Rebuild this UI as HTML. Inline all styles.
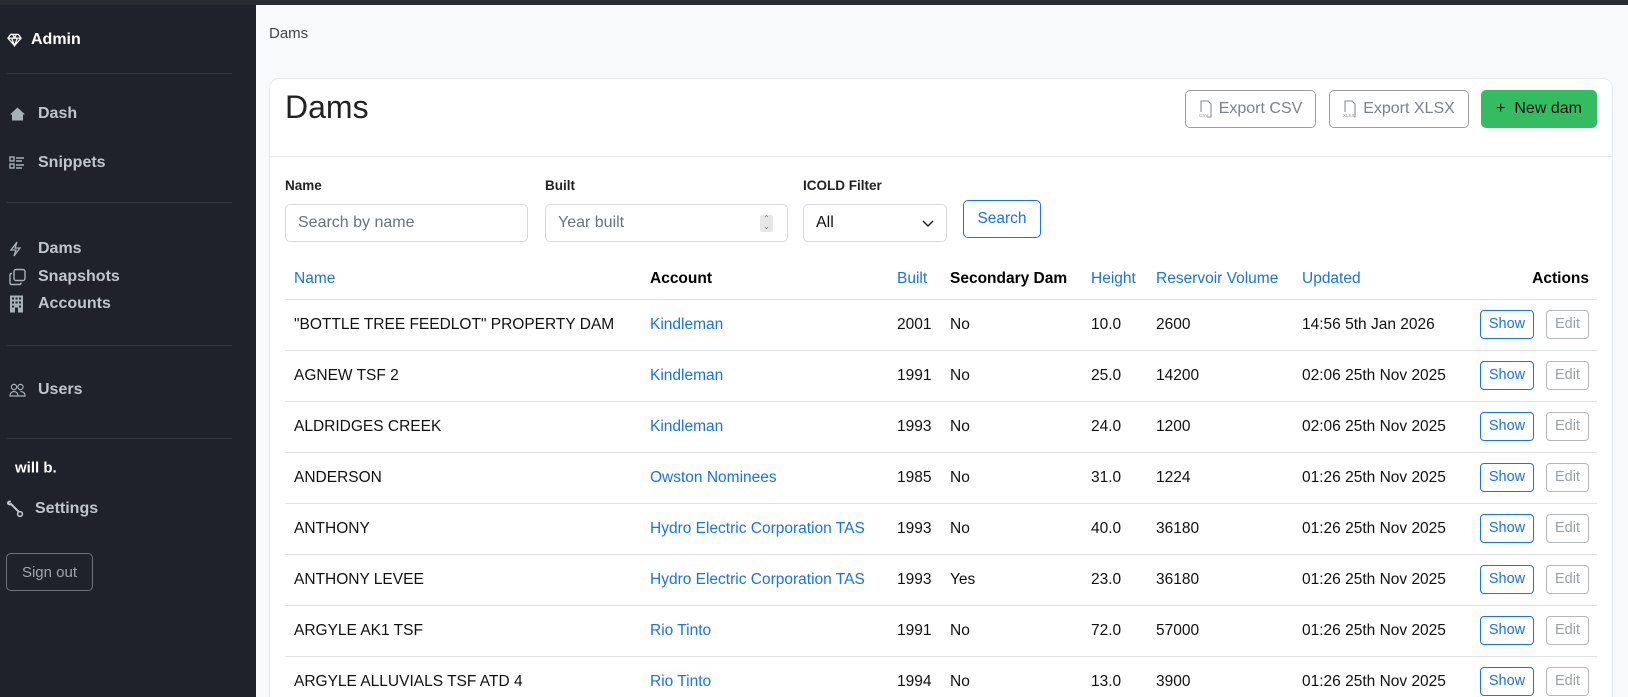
<!DOCTYPE html>
<html><head><meta charset="utf-8"><style>
*{box-sizing:border-box;margin:0;padding:0}
html,body{width:1628px;height:697px;overflow:hidden}
body{font-family:"Liberation Sans",sans-serif;background:#f8f9fa;position:relative;color:#111}
.top{position:absolute;left:0;top:0;width:1628px;height:5px;background:#2a2c33}
.side{position:absolute;left:0;top:5px;width:256px;height:692px;background:#1f222a;color:#c3c8d0}
.side .it{position:absolute;left:38px;font-size:16px;font-weight:bold;color:#bfc5ce;transform:translateY(-50%)}
.side .ic{position:absolute;left:9px;transform:translateY(-50%)}
.side hr{position:absolute;left:7px;width:225px;border:0;border-top:1px solid #343842}
.card{position:absolute;left:269px;top:78px;width:1344px;height:640px;background:#fff;border:1px solid #e6e9ec;border-radius:10px}
.btn{position:absolute;height:38px;border-radius:5px;font-size:16px;display:flex;align-items:center;justify-content:center}
.lbl{position:absolute;top:178px;font-size:13.5px;font-weight:bold;color:#222}
.inp{position:absolute;top:204px;height:38px;border:1px solid #d5d9de;border-radius:5px;font-size:16px;color:#6c737b;padding-left:12px;display:flex;align-items:center;background:#fff}
table{position:absolute;left:285px;top:259px;width:1312px;border-collapse:collapse;table-layout:fixed;font-size:15.5px}
td,th{padding-left:9px;text-align:left;white-space:nowrap;overflow:visible}
th{height:40px;border-bottom:1px solid #dee2e6;font-weight:bold;color:#000}
th.l{color:#1a73e8;font-weight:normal}
td{height:51px;border-bottom:1px solid #dee2e6;color:#111}
td a{color:#1a73e8}
.act{text-align:right;padding-right:8px}
.sh,.ed{display:inline-block;height:29px;line-height:27px;border-radius:4px;font-size:14.5px;vertical-align:middle}
.sh{width:54px;border:1px solid #1a73e8;color:#1a73e8;text-align:center;margin-right:12px}
.ed{width:43px;border:1px solid #b5b9bd;color:#9aa0a6;text-align:center}
</style></head><body>
<div class="top"></div>
<div class="side">
 <svg class="ic" style="left:7px;top:35px" width="15" height="14" viewBox="0 0 16 14" fill="none" stroke="#fff" stroke-width="1.4"><path d="M4 1h8l3 4-7 8-7-8z M1 5h14 M6 1l2 4 2-4 M5 5l3 8 3-8"/></svg>
 <div class="it" style="left:31px;top:35px;color:#fff;font-size:16px">Admin</div>
 <hr style="top:68px">
 <svg class="ic" style="top:109px" width="17" height="15" viewBox="0 0 17 15"><path d="M8.5 1L1 8h2v6h11V8h2z" fill="#a9b0ba"/></svg>
 <div class="it" style="top:109px">Dash</div>
 <svg class="ic" style="top:158px" width="16" height="14" viewBox="0 0 16 14" fill="none" stroke="#a9b0ba" stroke-width="1.4"><rect x="1" y="1" width="4" height="4"/><rect x="1" y="8" width="4" height="4"/><path d="M7 2h8M7 5h6M7 9h8M7 12h6"/></svg>
 <div class="it" style="top:158px">Snippets</div>
 <hr style="top:197px">
 <svg class="ic" style="top:244px" width="14" height="16" viewBox="0 0 14 16" fill="none" stroke="#a9b0ba" stroke-width="1.3"><path d="M8 1L2 9h5l-2 6 6-8H6z"/></svg>
 <div class="it" style="top:244px">Dams</div>
 <svg class="ic" style="top:272px" width="17" height="17" viewBox="0 0 17 17" fill="none" stroke="#a9b0ba" stroke-width="1.4"><rect x="5" y="1" width="11" height="11" rx="2"/><path d="M3 5H2.5Q1 5 1 6.5v8Q1 16 2.5 16h8Q12 16 12 14.5V14"/></svg>
 <div class="it" style="top:272px">Snapshots</div>
 <svg class="ic" style="top:299px;left:10px" width="13" height="17" viewBox="0 0 13 17"><rect x="0" y="0" width="13" height="17" fill="#a9b0ba"/><g fill="#1f222a"><rect x="2" y="2" width="2" height="2"/><rect x="5.5" y="2" width="2" height="2"/><rect x="9" y="2" width="2" height="2"/><rect x="2" y="6" width="2" height="2"/><rect x="5.5" y="6" width="2" height="2"/><rect x="9" y="6" width="2" height="2"/><rect x="2" y="10" width="2" height="2"/><rect x="9" y="10" width="2" height="2"/><rect x="5" y="12" width="3" height="5"/></g></svg>
 <div class="it" style="top:299px">Accounts</div>
 <hr style="top:340px">
 <svg class="ic" style="top:385px" width="17" height="14" viewBox="0 0 17 14" fill="none" stroke="#a9b0ba" stroke-width="1.2"><circle cx="5" cy="4" r="2.6"/><circle cx="11.5" cy="4" r="2.6"/><path d="M1 13c0-3 2-4.5 4-4.5s4 1.5 4 4.5zM8 13h8c0-3-2-4.5-4.5-4.5"/></svg>
 <div class="it" style="top:385px">Users</div>
 <hr style="top:433px">
 <div class="it" style="left:15px;top:463px;color:#fff;font-size:15px">will b.</div>
 <svg class="ic" style="top:504px;left:6px" width="18" height="18" viewBox="0 0 18 18" fill="none" stroke="#c3c8d0" stroke-width="2" stroke-linecap="round"><path d="M2 3.5Q2 1.5 4 1.5M2 3.5Q3.5 5 5 4L12 11"/><circle cx="14" cy="14" r="2.4" stroke-width="1.5"/></svg>
 <div class="it" style="left:35px;top:504px">Settings</div>
 <div style="position:absolute;left:6px;top:548px;width:87px;height:38px;border:1px solid #6e737b;border-radius:5px;color:#9ea4ad;font-size:15px;display:flex;align-items:center;justify-content:center">Sign out</div>
</div>
<div style="position:absolute;left:269px;top:25px;font-size:15px;color:#444">Dams</div>
<div class="card"></div>
<div style="position:absolute;left:269px;top:156px;width:1344px;border-top:1px solid #e6e9ec"></div>
<div style="position:absolute;left:285px;top:89px;font-size:32px;color:#222;font-weight:300">Dams</div>
<div class="btn" style="left:1185px;top:90px;width:131px;border:1px solid #9a9ea3;color:#7d8288">
 <svg width="14" height="18" viewBox="0 0 14 18" fill="none" stroke="#8a8f95" stroke-width="1.1" style="margin-right:6px"><path d="M2 12V1h7l3 3v13H8"/><text x="0" y="17" font-size="4.5" fill="#8a8f95" stroke="none" font-family="Liberation Sans">CSV</text></svg>Export CSV</div>
<div class="btn" style="left:1329px;top:90px;width:140px;border:1px solid #9a9ea3;color:#7d8288">
 <svg width="14" height="18" viewBox="0 0 14 18" fill="none" stroke="#8a8f95" stroke-width="1.1" style="margin-right:6px"><path d="M2 12V1h7l3 3v13H11"/><text x="0" y="17" font-size="4.5" fill="#8a8f95" stroke="none" font-family="Liberation Sans">XLSX</text></svg>Export XLSX</div>
<div class="btn" style="left:1481px;top:90px;width:116px;background:#33bd60;color:#111"><span style="margin-right:9px">+</span>New dam</div>
<div class="lbl" style="left:285px">Name</div>
<div class="lbl" style="left:545px">Built</div>
<div class="lbl" style="left:803px">ICOLD Filter</div>
<div class="inp" style="left:285px;width:243px">Search by name</div>
<div class="inp" style="left:545px;width:243px">Year built<span style="position:absolute;right:14px;top:10px;width:13px;height:17px;background:#e6e7e9;border-radius:2px;font-size:8px;line-height:8px;text-align:center;color:#777">⌃<br>⌄</span></div>
<div class="inp" style="left:803px;width:144px;color:#111">All<svg style="position:absolute;right:12px;top:15px" width="12" height="8" viewBox="0 0 12 8" fill="none" stroke="#222" stroke-width="1.5"><path d="M1 1l5 5 5-5"/></svg></div>
<div class="btn" style="left:963px;top:200px;width:78px;border:1px solid #1a73e8;color:#1a73e8;font-size:15.5px">Search</div>
<table>
<colgroup><col style="width:356px"><col style="width:247px"><col style="width:53px"><col style="width:141px"><col style="width:65px"><col style="width:146px"><col style="width:177px"><col style="width:127px"></colgroup>
<tr><th class="l">Name</th><th>Account</th><th class="l">Built</th><th>Secondary Dam</th><th class="l">Height</th><th class="l">Reservoir Volume</th><th class="l">Updated</th><th class="act">Actions</th></tr>
<tr><td>"BOTTLE TREE FEEDLOT" PROPERTY DAM</td><td><a>Kindleman</a></td><td>2001</td><td>No</td><td>10.0</td><td>2600</td><td>14:56 5th Jan 2026</td><td class="act"><span class="sh">Show</span><span class="ed">Edit</span></td></tr>
<tr><td>AGNEW TSF 2</td><td><a>Kindleman</a></td><td>1991</td><td>No</td><td>25.0</td><td>14200</td><td>02:06 25th Nov 2025</td><td class="act"><span class="sh">Show</span><span class="ed">Edit</span></td></tr>
<tr><td>ALDRIDGES CREEK</td><td><a>Kindleman</a></td><td>1993</td><td>No</td><td>24.0</td><td>1200</td><td>02:06 25th Nov 2025</td><td class="act"><span class="sh">Show</span><span class="ed">Edit</span></td></tr>
<tr><td>ANDERSON</td><td><a>Owston Nominees</a></td><td>1985</td><td>No</td><td>31.0</td><td>1224</td><td>01:26 25th Nov 2025</td><td class="act"><span class="sh">Show</span><span class="ed">Edit</span></td></tr>
<tr><td>ANTHONY</td><td><a>Hydro Electric Corporation TAS</a></td><td>1993</td><td>No</td><td>40.0</td><td>36180</td><td>01:26 25th Nov 2025</td><td class="act"><span class="sh">Show</span><span class="ed">Edit</span></td></tr>
<tr><td>ANTHONY LEVEE</td><td><a>Hydro Electric Corporation TAS</a></td><td>1993</td><td>Yes</td><td>23.0</td><td>36180</td><td>01:26 25th Nov 2025</td><td class="act"><span class="sh">Show</span><span class="ed">Edit</span></td></tr>
<tr><td>ARGYLE AK1 TSF</td><td><a>Rio Tinto</a></td><td>1991</td><td>No</td><td>72.0</td><td>57000</td><td>01:26 25th Nov 2025</td><td class="act"><span class="sh">Show</span><span class="ed">Edit</span></td></tr>
<tr><td>ARGYLE ALLUVIALS TSF ATD 4</td><td><a>Rio Tinto</a></td><td>1994</td><td>No</td><td>13.0</td><td>3900</td><td>01:26 25th Nov 2025</td><td class="act"><span class="sh">Show</span><span class="ed">Edit</span></td></tr>
</table>
</body></html>
